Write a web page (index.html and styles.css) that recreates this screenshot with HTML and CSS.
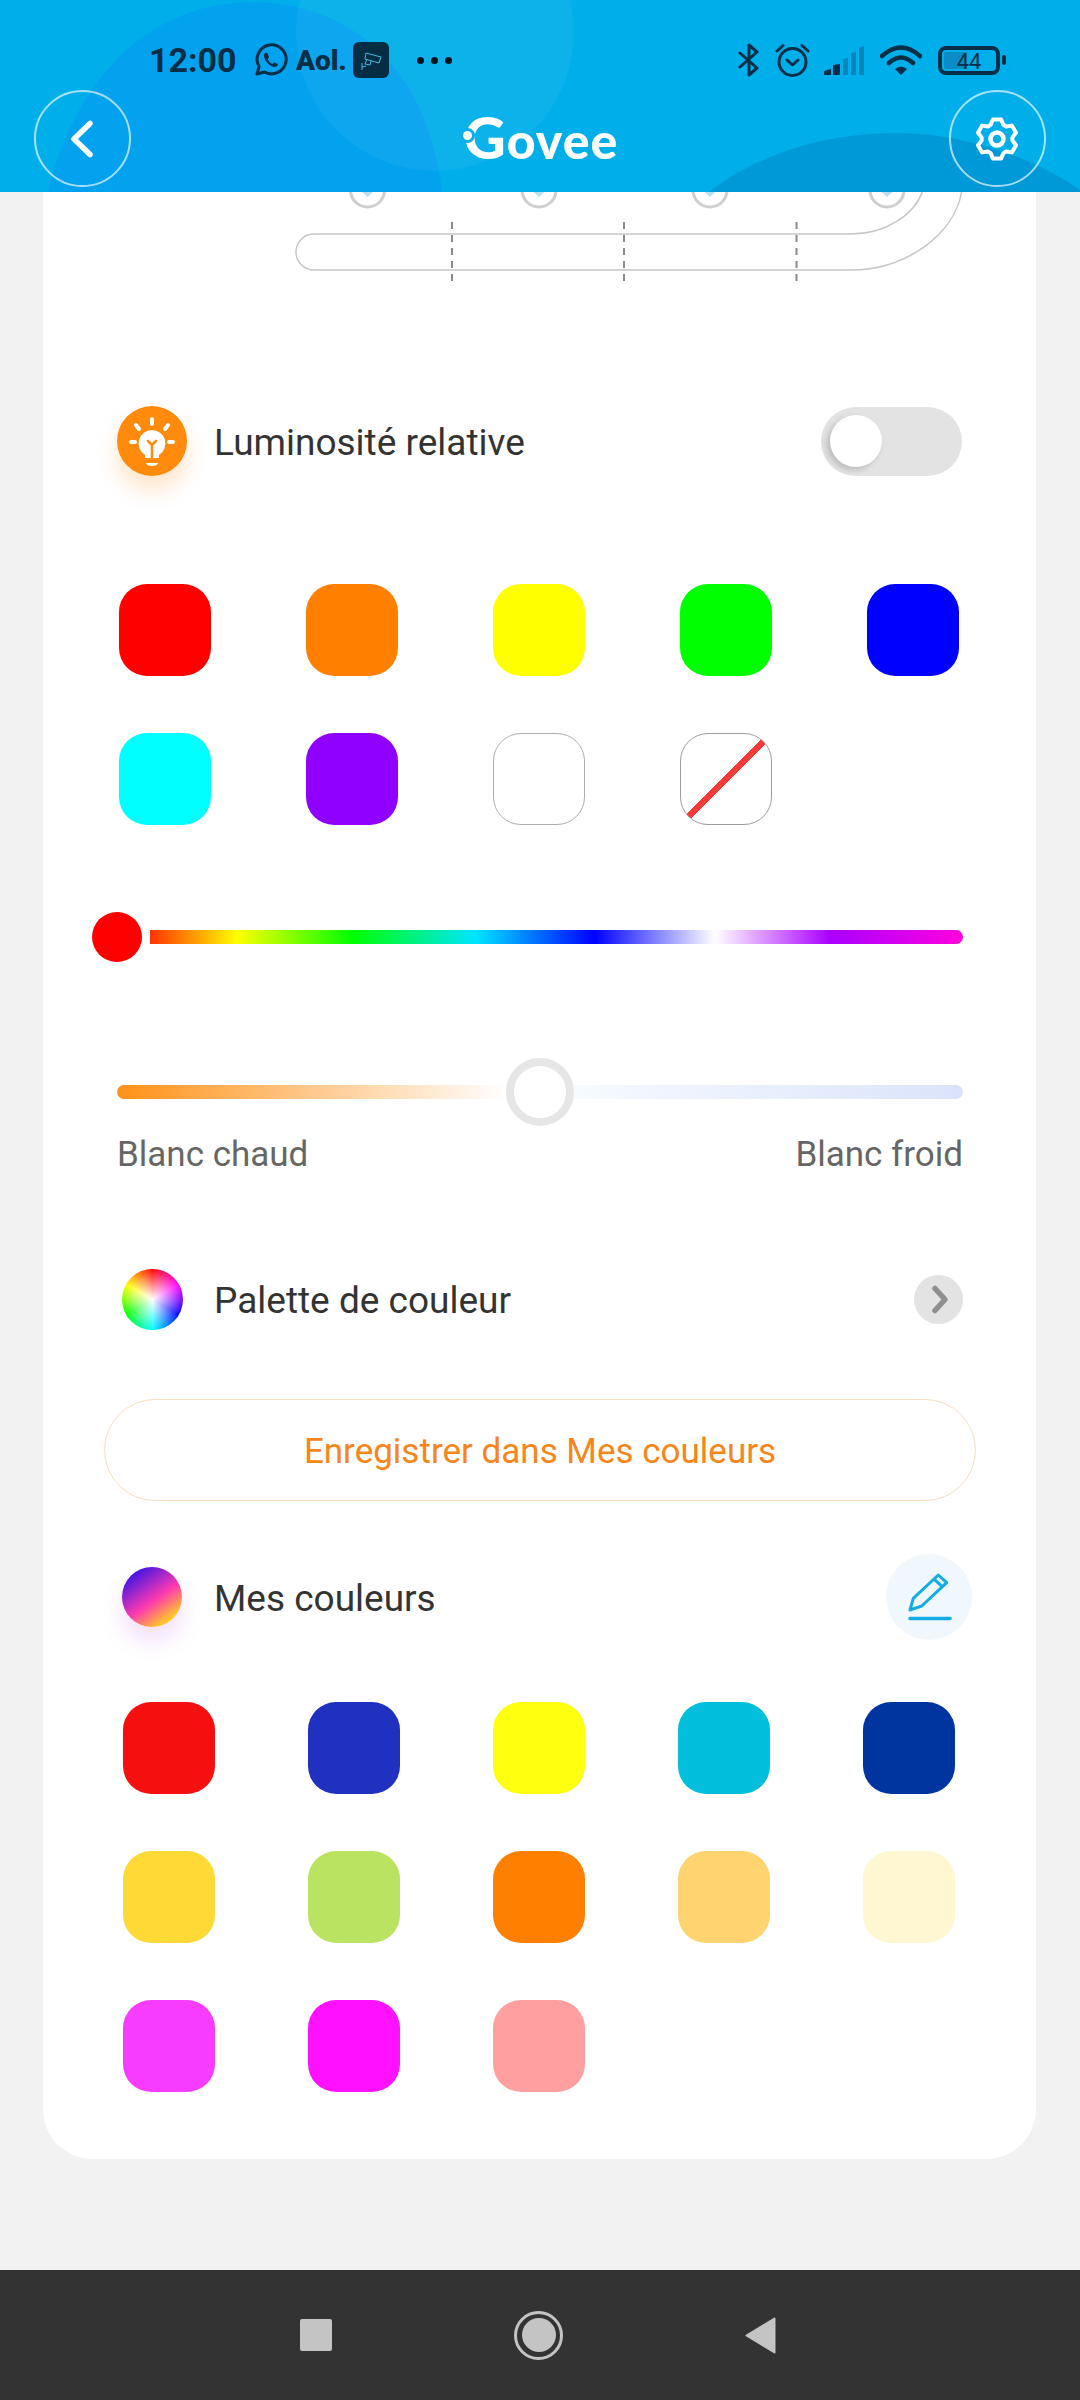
FILE: index.html
```html
<!DOCTYPE html>
<html lang="fr">
  <head>
    <meta charset="UTF-8" />
    <meta name="viewport" content="width=device-width, initial-scale=1.0" />
    <title>Govee</title>
    <link rel="stylesheet" href="styles.css">
  </head>
  <body>
    <header class="header">
      <!-- decorative blobs behind the bar -->
      <svg class="header-bg" viewBox="0 0 1080 192" aria-hidden="true">
        <path d="M48 192C70 100 130 12 235 3C335 -5 395 55 418 105C432 135 440 170 442 192Z" fill="#02a2ee" />
        <circle cx="435" cy="32" r="139" fill="#fff" fill-opacity="0.05" />
        <path d="M709 192C760 152 830 133 895 133C960 133 1030 155 1080 190V192Z" fill="#0099d8" />
      </svg>

      <div class="status-bar">
        <div class="status-left">
          <span class="time">12:00</span>
          <svg class="icon-wa" viewBox="0 0 34 34">
            <path d="M3 31l2-7.500a14.500 14.500 0 1 1 5.500 5.500z" fill="none" stroke="#062f47" stroke-width="3" stroke-linejoin="round" />
            <path d="M11.500 9.500c-2 1.500-2 4 -.5 7c1.500 3 4.500 6 8 7.200c2.500 .8 4.500 -.2 5 -2.500l-4-2-1.500 1.700c-2-.8-4-3-5-5l1.500-1.700-1.500-4.200z" fill="#062f47" />
          </svg>
          <span class="aol">Aol.</span>
          <span class="cam-tile">
            <svg viewBox="0 0 36 36">
              <path d="M13 11l15 4-2 6-14-4zM14 17l-2 5 5 1 1-4M9 21v7M9 25l4-1" fill="none" stroke="#4db8e0" stroke-width="1" />
            </svg>
          </span>
          <span class="dots"><i></i><i></i><i></i></span>
        </div>
        <div class="status-right">
          <svg class="icon-bt" viewBox="0 0 21 34">
            <path d="M2 10l17 15-8 7V2l8 7L2 24" fill="none" stroke="#062f47" stroke-width="3" stroke-linejoin="round" stroke-linecap="round" />
          </svg>
          <svg class="icon-alarm" viewBox="0 0 35 34">
            <circle cx="17.500" cy="19" r="13.500" fill="none" stroke="#062f47" stroke-width="3" />
            <path d="M12 17l5.500 5 5.500-5M2 8l6-5.500M33 8l-6-5.500" fill="none" stroke="#062f47" stroke-width="3" stroke-linecap="round" stroke-linejoin="round" />
          </svg>
          <svg class="icon-signal" viewBox="0 0 40 29">
            <path d="M0 29v-4l7-2v6zM9 29v-10l7-1v11z" fill="#062f47" />
            <path d="M19 29V13l5-1v17zM27 29V7l5-1v23zM35 29V2l5-2v29z" fill="#0b86bd" />
          </svg>
          <svg class="icon-wifi" viewBox="0 0 42 30">
            <path d="M2 11Q21 -6 40 11M9 18Q21 7 33 18" fill="none" stroke="#062f47" stroke-width="4.500" stroke-linecap="round" />
            <path d="M15 24Q21 19 27 24L21 30Z" fill="#062f47" />
          </svg>
          <div class="battery">
            <div class="battery-body">44</div>
            <div class="battery-nub"></div>
          </div>
        </div>
      </div>

      <nav class="nav-bar">
        <button class="round-btn">
          <svg class="icon-back" viewBox="0 0 27 42">
            <path d="M21 5.500L5 21l16 15.500" fill="none" stroke="#fff" stroke-width="5.500" stroke-linecap="round" stroke-linejoin="round" />
          </svg>
        </button>
        <div class="logo"><span class="logo-dot"></span><span class="logo-g">G</span>ovee</div>
        <button class="round-btn">
          <svg class="icon-gear" viewBox="-22 -22 44 44">
            <polygon points="-6.30,-14.16 -4.16,-19.56 4.16,-19.56 6.30,-14.16 9.11,-12.54 14.86,-13.38 19.02,-6.18 15.41,-1.62 15.41,1.62 19.02,6.18 14.86,13.38 9.11,12.54 6.30,14.16 4.16,19.56 -4.16,19.56 -6.30,14.16 -9.11,12.54 -14.86,13.38 -19.02,6.18 -15.41,1.62 -15.41,-1.62 -19.02,-6.18 -14.86,-13.38 -9.11,-12.54" fill="none" stroke="#fff" stroke-width="4" stroke-linejoin="round" />
            <circle r="6.500" fill="none" stroke="#fff" stroke-width="4.500" />
          </svg>
        </button>
      </nav>
    </header>

    <main class="page">
      <section class="card">
        <svg class="strip" viewBox="43 192 993 90">
          <g fill="none" stroke="#cfcfcf" stroke-width="3">
            <circle cx="367.500" cy="190" r="17" />
            <circle cx="539" cy="190" r="17" />
            <circle cx="710" cy="190" r="17" />
            <circle cx="887" cy="190" r="17" />
          </g>
          <g fill="#bcdff0">
            <path d="M360 190h15l-7.500 7z" />
            <path d="M531.500 190h15l-7.500 7z" />
            <path d="M702.500 190h15l-7.500 7z" />
            <path d="M879.500 190h15l-7.500 7z" />
          </g>
          <g fill="none" stroke="#c6c6c6" stroke-width="1.500">
            <path d="M923 190C915 215 885 234 851 234H314A18 18 0 0 0 314 270H851C905 270 955 235 962 190" />
          </g>
          <g stroke="#8a8a8a" stroke-width="2" stroke-dasharray="7 6">
            <line x1="452" y1="222" x2="452" y2="282" />
            <line x1="624" y1="222" x2="624" y2="282" />
            <line x1="796.500" y1="222" x2="796.500" y2="282" />
          </g>
        </svg>

        <div class="card-body">
          <div class="row row-bright">
            <div class="row-icon">
              <span class="bulb">
                <svg viewBox="0 0 70 70">
                  <path d="M35 24a13.500 13.500 0 0 1 7 25v3H28v-3a13.500 13.500 0 0 1 7-25z" fill="#fff" />
                  <path d="M31 35l4 4 4-4M35 39v13" fill="none" stroke="#ff8a0b" stroke-width="2.500" stroke-linecap="round" stroke-linejoin="round" />
                  <path d="M29 57h12q-1 3-6 3t-6-3z" fill="#fff" />
                  <path d="M35 13v5M19 19l3 4M51 19l-3 4M14 36h4M52 36h4" fill="none" stroke="#fff" stroke-width="4" stroke-linecap="round" />
                </svg>
              </span>
            </div>
            <span class="row-label">Luminosité relative</span>
            <div class="toggle"><span class="toggle-knob"></span></div>
          </div>

          <div class="swatches swatches-top">
            <span class="swatch" style="background:#ff0000"></span>
            <span class="swatch" style="background:#ff8000"></span>
            <span class="swatch" style="background:#ffff00"></span>
            <span class="swatch" style="background:#00ff00"></span>
            <span class="swatch" style="background:#0000ff"></span>
            <span class="swatch" style="background:#00ffff"></span>
            <span class="swatch" style="background:#8f00ff"></span>
            <span class="swatch swatch-white"></span>
            <span class="swatch swatch-off"></span>
          </div>

          <div class="hue-slider">
            <span class="hue-thumb"></span>
            <div class="hue-track"></div>
          </div>

          <div class="temp-slider">
            <div class="temp-track temp-warm"></div>
            <span class="temp-thumb"></span>
            <div class="temp-track temp-cold"></div>
          </div>
          <div class="temp-labels">
            <span>Blanc chaud</span>
            <span>Blanc froid</span>
          </div>

          <div class="row row-palette">
            <div class="row-icon"><span class="wheel"></span></div>
            <span class="row-label">Palette de couleur</span>
            <span class="more">
              <svg viewBox="0 0 49 49">
                <path d="M21 13.500l10 11-10 11" fill="none" stroke="#8f8f8f" stroke-width="5.500" stroke-linecap="round" stroke-linejoin="round" />
              </svg>
            </span>
          </div>

          <button class="save-btn">Enregistrer dans Mes couleurs</button>

          <div class="row row-mine">
            <div class="row-icon"><span class="mine-dot"></span></div>
            <span class="row-label">Mes couleurs</span>
            <span class="edit">
              <svg viewBox="0 0 86 86">
                <path d="M24 56l3.300-11.700L52.300 21l8.400 7.700L35.700 52zM48.300 25.300l8 7.400" fill="none" stroke="#14ade3" stroke-width="3" stroke-linejoin="round" />
                <path d="M24 64.500h40" fill="none" stroke="#14ade3" stroke-width="3.500" stroke-linecap="round" />
              </svg>
            </span>
          </div>

          <div class="swatches swatches-mine">
            <span class="swatch" style="background:#f50f0f"></span>
            <span class="swatch" style="background:#2030c0"></span>
            <span class="swatch" style="background:#ffff10"></span>
            <span class="swatch" style="background:#00bedc"></span>
            <span class="swatch" style="background:#0035a0"></span>
            <span class="swatch" style="background:#ffd935"></span>
            <span class="swatch" style="background:#b9e360"></span>
            <span class="swatch" style="background:#ff8000"></span>
            <span class="swatch" style="background:#ffd470"></span>
            <span class="swatch" style="background:#fff6d2"></span>
            <span class="swatch" style="background:#f73cff"></span>
            <span class="swatch" style="background:#ff10ff"></span>
            <span class="swatch" style="background:#ff9fa0"></span>
          </div>
        </div>
      </section>
    </main>

    <footer class="sys-nav">
      <span class="sys-square"></span>
      <span class="sys-home"><i></i></span>
      <svg class="sys-back" viewBox="0 0 31 37">
        <path d="M29.500 1.500v34L1.500 18.500z" fill="#c4c4c4" stroke="#c4c4c4" stroke-width="2" stroke-linejoin="round" />
      </svg>
    </footer>
  </body>
</html>
```

FILE: styles.css
```css
* {
  box-sizing: border-box;
}
html,
body {
  margin: 0;
  padding: 0;
}
body {
  display: flex;
  flex-direction: column;
  width: 1080px;
  height: 2400px;
  background: #f2f2f2;
  font-family: Roboto, "Liberation Sans", sans-serif;
  color: #333;
  overflow: hidden;
}

/* header */
.header {
  position: relative;
  height: 192px;
  flex: none;
  background: #00aeea;
  overflow: hidden;
}
.header-bg {
  position: absolute;
  left: 0;
  top: 0;
  width: 1080px;
  height: 192px;
}
.status-bar {
  position: relative;
  display: flex;
  justify-content: space-between;
  align-items: center;
  height: 36px;
  margin-top: 42px;
  padding: 0 74px 0 149px;
  color: #062f47;
}
.status-left,
.status-right {
  display: flex;
  align-items: center;
}
.time {
  font-size: 34px;
  font-weight: 700;
  line-height: 36px;
  width: 87px;
  margin-right: 18px;
}
.icon-wa {
  width: 34px;
  height: 34px;
  margin-right: 8px;
}
.aol {
  font-size: 28px;
  font-weight: 900;
  width: 51px;
  margin-right: 6px;
}
.cam-tile {
  display: block;
  width: 36px;
  height: 36px;
  border-radius: 6px;
  background: #052d44;
  margin-right: 28px;
}
.cam-tile svg {
  display: block;
}
.dots {
  display: flex;
  gap: 7px;
}
.dots i {
  display: block;
  width: 7px;
  height: 7px;
  border-radius: 50%;
  background: #04141f;
}
.icon-bt {
  width: 21px;
  height: 34px;
  margin-right: 16px;
}
.icon-alarm {
  width: 35px;
  height: 34px;
  margin-right: 14px;
}
.icon-signal {
  width: 40px;
  height: 29px;
  margin-right: 16px;
}
.icon-wifi {
  width: 42px;
  height: 30px;
  margin-right: 16px;
}
.battery {
  display: flex;
  align-items: center;
  gap: 2px;
}
.battery-body {
  width: 62px;
  height: 29px;
  border: 4px solid #062f47;
  border-radius: 8px;
  padding: 2px;
  background: linear-gradient(90deg, #0b8cc6 46%, transparent 46%) content-box;
  font-size: 22px;
  line-height: 19px;
  text-align: center;
  color: #062f47;
}
.battery-nub {
  width: 4px;
  height: 10px;
  border-radius: 2px;
  background: #062f47;
}
.nav-bar {
  position: relative;
  display: flex;
  justify-content: space-between;
  align-items: center;
  margin-top: 12px;
  padding: 0 34px;
}
.round-btn {
  display: flex;
  align-items: center;
  justify-content: center;
  width: 97px;
  height: 97px;
  padding: 0;
  border: 2px solid rgba(255, 255, 255, 0.65);
  border-radius: 50%;
  background: none;
}
.icon-back {
  width: 27px;
  height: 42px;
}
.icon-gear {
  width: 44px;
  height: 44px;
}
.logo {
  position: relative;
  font-family: Lato, sans-serif;
  font-size: 50px;
  font-weight: 900;
  line-height: 54px;
  letter-spacing: 1px;
  color: #fff;
  margin-left: 2px;
}
.logo-g {
  font-size: 58px;
}
.logo-dot {
  position: absolute;
  left: -1px;
  top: 21px;
  width: 9px;
  height: 9px;
  border-radius: 50%;
  background: #fff;
  box-shadow: 0 0 0 3px #06aeee;
}

/* card */
.page {
  flex: 1;
}
.card {
  margin: 0 44px 0 43px;
  background: #fff;
  border-radius: 0 0 50px 50px;
}
.strip {
  display: block;
  width: 993px;
  height: 90px;
}
.card-body {
  padding: 124px 73px 67px 74px;
}
.row {
  display: flex;
  align-items: center;
}
.row-icon {
  display: flex;
  justify-content: center;
  width: 70px;
  flex: none;
  margin-right: 27px;
}
.row-label {
  flex: 1;
  padding-top: 2px;
  font-size: 37px;
}
.row-bright {
  height: 70px;
}
.bulb {
  display: block;
  width: 70px;
  height: 70px;
  border-radius: 50%;
  background: #ff8a0b;
  box-shadow: 0 14px 22px rgba(255, 138, 11, 0.22);
}
.bulb svg {
  display: block;
}
.toggle {
  display: flex;
  align-items: center;
  width: 141px;
  height: 69px;
  padding-left: 9px;
  border-radius: 35px;
  background: #e3e3e3;
  margin-right: 1px;
}
.toggle-knob {
  display: block;
  width: 52px;
  height: 52px;
  border-radius: 50%;
  background: #fff;
  box-shadow: -3px 3px 6px rgba(0, 0, 0, 0.18);
}

.swatches {
  display: grid;
  grid-template-columns: repeat(5, 92px);
  justify-content: space-between;
  row-gap: 57px;
}
.swatches-top {
  margin: 108px 4px 0 2px;
}
.swatches-mine {
  margin: 62px 8px 0 6px;
}
.swatch {
  display: block;
  height: 92px;
  border-radius: 28px;
}
.swatch-white {
  border: 1.5px solid #adadad;
}
.swatch-off {
  border: 1.5px solid #9c9c9c;
  background: linear-gradient(135deg, transparent calc(50% - 3.500px), #f53a3a calc(50% - 3.500px), #f53a3a calc(50% + 3.500px), transparent calc(50% + 3.500px));
}

/* sliders */
.hue-slider {
  display: flex;
  align-items: center;
  gap: 8px;
  margin: 87px 0 0 -25px;
}
.hue-thumb {
  display: block;
  flex: none;
  width: 50px;
  height: 50px;
  border-radius: 50%;
  background: #ff0000;
}
.hue-track {
  flex: 1;
  height: 14px;
  border-radius: 0 7px 7px 0;
  background: linear-gradient(90deg, #ff3300 0%, #ffff00 10.700%, #00ff00 24.900%, #00e5ff 40%, #0000ff 54.700%, #ffffff 69.500%, #aa00ff 83.600%, #ff00dd 100%);
}
.temp-slider {
  display: flex;
  align-items: center;
  margin-top: 96px;
}
.temp-track {
  flex: 1;
  height: 14px;
}
.temp-warm {
  border-radius: 7px 0 0 7px;
  background: linear-gradient(90deg, #ff9118, #ffffff);
}
.temp-cold {
  border-radius: 0 7px 7px 0;
  background: linear-gradient(90deg, #f6fbff, #dbe3fb);
}
.temp-thumb {
  display: block;
  flex: none;
  width: 68px;
  height: 68px;
  border: 8px solid #e6e6e6;
  border-radius: 50%;
  background: #fff;
}
.temp-labels {
  display: flex;
  justify-content: space-between;
  margin-top: 9px;
  margin-bottom: 94px;
  font-size: 35px;
  line-height: 40px;
  color: #666;
}

/* rows below the sliders */
.row-palette {
  height: 60px;
}
.wheel {
  display: block;
  width: 61px;
  height: 61px;
  border-radius: 50%;
  background: radial-gradient(circle, #fff 0, rgba(255, 255, 255, 0) 72%), conic-gradient(#ff0000, #ff00ff 60deg, #0000ff 120deg, #00ffff 180deg, #00ff00 240deg, #ffff00 300deg, #ff0000);
}
.more {
  display: block;
  width: 49px;
  height: 49px;
  border-radius: 50%;
  background: #e3e3e3;
}
.more svg {
  display: block;
}
.save-btn {
  display: block;
  width: 872px;
  height: 102px;
  margin: 70px 0 0 -13px;
  padding: 2px 0 0;
  border: 1.5px solid #f9dfc0;
  border-radius: 51px;
  background: #fff;
  font-family: inherit;
  font-size: 35px;
  color: #f7861a;
}
.row-mine {
  height: 86px;
  margin-top: 53px;
}
.mine-dot {
  display: block;
  width: 60px;
  height: 60px;
  border-radius: 50%;
  background: linear-gradient(145deg, #2a10ea 8%, #ff3ab0 55%, #fff000 92%);
  box-shadow: 0 14px 22px rgba(190, 80, 230, 0.18);
}
.edit {
  display: block;
  width: 86px;
  height: 86px;
  margin-right: -9px;
  border-radius: 50%;
  background: #f0f8fe;
}
.edit svg {
  display: block;
}

/* system navigation */
.sys-nav {
  display: flex;
  align-items: center;
  justify-content: center;
  gap: 182px;
  flex: none;
  height: 130px;
  padding-right: 4px;
  background: #333;
}
.sys-square {
  display: block;
  width: 32px;
  height: 32px;
  border-radius: 2px;
  background: #c4c4c4;
}
.sys-home {
  display: flex;
  align-items: center;
  justify-content: center;
  width: 49px;
  height: 49px;
  border: 3px solid #c4c4c4;
  border-radius: 50%;
}
.sys-home i {
  display: block;
  width: 34px;
  height: 34px;
  border-radius: 50%;
  background: #c4c4c4;
}
.sys-back {
  width: 31px;
  height: 37px;
}
```
